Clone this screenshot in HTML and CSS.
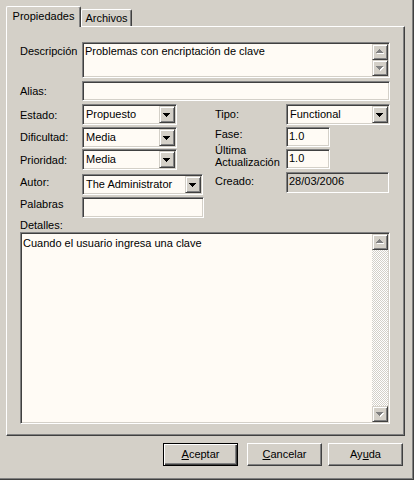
FILE: index.html
```html
<!DOCTYPE html>
<html lang="es">
<head>
<meta charset="utf-8">
<title>Propiedades</title>
<link rel="stylesheet" href="styles.css">
</head>
<body>
<div class="window">
  <div class="tabs">
    <div class="tab tab-active">Propiedades</div>
    <div class="tab tab-inactive">Archivos</div>
  </div>
  <div class="panel">
    <div class="form">
      <div class="lbl mt3">Descripción</div>
      <div class="memo span3 h36">
        <div class="memo-text pt2">Problemas con encriptación de clave</div>
        <div class="vscroll">
          <div class="sbtn"><svg class="arr-up" width="8" height="5" viewBox="0 0 8 5" shape-rendering="crispEdges"><g fill="#fff"><rect x="4" y="1" width="1" height="1"/><rect x="3" y="2" width="3" height="1"/><rect x="2" y="3" width="5" height="1"/><rect x="1" y="4" width="7" height="1"/></g><g fill="#808080"><rect x="3" y="0" width="1" height="1"/><rect x="2" y="1" width="3" height="1"/><rect x="1" y="2" width="5" height="1"/><rect x="0" y="3" width="7" height="1"/></g></svg></div>
          <div class="sbtn"><svg class="arr-down" width="8" height="5" viewBox="0 0 8 5" shape-rendering="crispEdges"><g fill="#fff"><rect x="1" y="1" width="7" height="1"/><rect x="2" y="2" width="5" height="1"/><rect x="3" y="3" width="3" height="1"/><rect x="4" y="4" width="1" height="1"/></g><g fill="#808080"><rect x="0" y="0" width="7" height="1"/><rect x="1" y="1" width="5" height="1"/><rect x="2" y="2" width="3" height="1"/><rect x="3" y="3" width="1" height="1"/></g></svg></div>
        </div>
      </div>

      <div class="lbl mt4">Alias:</div>
      <div class="edit span3 h20"></div>

      <div class="lbl mt5">Estado:</div>
      <div class="combo w95">
        <span class="combo-text">Propuesto</span>
        <span class="drop"><svg class="arr-combo" width="7" height="4" viewBox="0 0 7 4" shape-rendering="crispEdges"><g fill="#000"><rect x="0" y="0" width="7" height="1"/><rect x="1" y="1" width="5" height="1"/><rect x="2" y="2" width="3" height="1"/><rect x="3" y="3" width="1" height="1"/></g></svg></span>
      </div>
      <div class="lbl mt4">Tipo:</div>
      <div class="combo">
        <span class="combo-text">Functional</span>
        <span class="drop"><svg class="arr-combo" width="7" height="4" viewBox="0 0 7 4" shape-rendering="crispEdges"><g fill="#000"><rect x="0" y="0" width="7" height="1"/><rect x="1" y="1" width="5" height="1"/><rect x="2" y="2" width="3" height="1"/><rect x="3" y="3" width="1" height="1"/></g></svg></span>
      </div>

      <div class="lbl mt5">Dificultad:</div>
      <div class="combo w95 mt1">
        <span class="combo-text">Media</span>
        <span class="drop"><svg class="arr-combo" width="7" height="4" viewBox="0 0 7 4" shape-rendering="crispEdges"><g fill="#000"><rect x="0" y="0" width="7" height="1"/><rect x="1" y="1" width="5" height="1"/><rect x="2" y="2" width="3" height="1"/><rect x="3" y="3" width="1" height="1"/></g></svg></span>
      </div>
      <div class="lbl mt2">Fase:</div>
      <div class="edit w44 h20 mt1">1.0</div>

      <div class="lbl mt6">Prioridad:</div>
      <div class="combo w95 mt1">
        <span class="combo-text">Media</span>
        <span class="drop"><svg class="arr-combo" width="7" height="4" viewBox="0 0 7 4" shape-rendering="crispEdges"><g fill="#000"><rect x="0" y="0" width="7" height="1"/><rect x="1" y="1" width="5" height="1"/><rect x="2" y="2" width="3" height="1"/><rect x="3" y="3" width="1" height="1"/></g></svg></span>
      </div>
      <div class="lbl lbl-two">Última<br>Actualización</div>
      <div class="edit w44 h20 mt1">1.0</div>

      <div class="lbl mt5">Autor:</div>
      <div class="combo w121 mt3">
        <span class="combo-text">The Administrator</span>
        <span class="drop"><svg class="arr-combo" width="7" height="4" viewBox="0 0 7 4" shape-rendering="crispEdges"><g fill="#000"><rect x="0" y="0" width="7" height="1"/><rect x="1" y="1" width="5" height="1"/><rect x="2" y="2" width="3" height="1"/><rect x="3" y="3" width="1" height="1"/></g></svg></span>
      </div>
      <div class="lbl mt4">Creado:</div>
      <div class="edit disabled w103 h21 mt1">28/03/2006</div>

      <div class="lbl mt3">Palabras</div>
      <div class="edit w122 h21 mt2"></div>

      <div class="lbl lbl-full">Detalles:</div>
      <div class="memo full h192">
        <div class="memo-text pt4">Cuando el usuario ingresa una clave</div>
        <div class="vscroll">
          <div class="sbtn"><svg class="arr-up" width="8" height="5" viewBox="0 0 8 5" shape-rendering="crispEdges"><g fill="#fff"><rect x="4" y="1" width="1" height="1"/><rect x="3" y="2" width="3" height="1"/><rect x="2" y="3" width="5" height="1"/><rect x="1" y="4" width="7" height="1"/></g><g fill="#808080"><rect x="3" y="0" width="1" height="1"/><rect x="2" y="1" width="3" height="1"/><rect x="1" y="2" width="5" height="1"/><rect x="0" y="3" width="7" height="1"/></g></svg></div>
          <div class="track"></div>
          <div class="sbtn"><svg class="arr-down" width="8" height="5" viewBox="0 0 8 5" shape-rendering="crispEdges"><g fill="#fff"><rect x="1" y="1" width="7" height="1"/><rect x="2" y="2" width="5" height="1"/><rect x="3" y="3" width="3" height="1"/><rect x="4" y="4" width="1" height="1"/></g><g fill="#808080"><rect x="0" y="0" width="7" height="1"/><rect x="1" y="1" width="5" height="1"/><rect x="2" y="2" width="3" height="1"/><rect x="3" y="3" width="1" height="1"/></g></svg></div>
        </div>
      </div>
    </div>
  </div>
  <div class="actions">
    <div class="btn btn-default"><u>A</u>ceptar</div>
    <div class="btn"><u>C</u>ancelar</div>
    <div class="btn">Ay<u>u</u>da</div>
  </div>
</div>
</body>
</html>
```
FILE: styles.css
```css
* { box-sizing: border-box; }
html, body { margin: 0; padding: 0; }
body {
  background: #d4d0c8;
  font-family: "Liberation Sans", Arial, sans-serif;
  font-size: 11px;
  line-height: 13px;
  color: #000;
}
.window {
  width: 414px;
  height: 480px;
  box-shadow: inset -1px -1px #404040, inset -2px -2px #808080;
}

/* Tabs */
.tabs {
  display: flex;
  align-items: flex-end;
  height: 26px;
  padding-left: 6px;
}
.tab {
  background: #d4d0c8;
  border-top: 1px solid #fff;
  border-left: 1px solid #fff;
  border-right: 1px solid #404040;
  box-shadow: inset -1px 0 #808080;
  border-radius: 2px 2px 0 0;
  text-align: center;
  white-space: nowrap;
}
.tab-active {
  width: 75px;
  height: 21px;
  margin-bottom: -1px;
  padding-top: 3px;
  position: relative;
  z-index: 1;
}
.tab-inactive {
  width: 51px;
  height: 17px;
  padding-top: 2px;
}

/* Panel */
.panel {
  margin-left: 6px;
  width: 399px;
  height: 410px;
  border-top: 1px solid #fff;
  border-left: 1px solid #fff;
  border-right: 1px solid #404040;
  border-bottom: 1px solid #404040;
  box-shadow: inset -1px -1px #808080;
  padding: 15px 14px 10px 13px;
}
.form {
  display: grid;
  grid-template-columns: 62px 133px 71px 104px;
  grid-template-rows: 39px 23px 22px 22px 23px 24px 25px 12px 192px;
  align-items: start;
}
.lbl { white-space: nowrap; }
.lbl-two { line-height: 12px; margin-top: -4px; }
.lbl-full { grid-column: 1 / -1; margin-top: -1px; }
.span3 { grid-column: 2 / 5; }
.full { grid-column: 1 / -1; }

.mt1 { margin-top: 1px; }
.mt2 { margin-top: 2px; }
.mt3 { margin-top: 3px; }
.mt4 { margin-top: 4px; }
.mt5 { margin-top: 5px; }
.mt6 { margin-top: 6px; }
.h20 { height: 20px; }
.h21 { height: 21px; }
.h36 { height: 36px; }
.h192 { height: 192px; }
.w44 { width: 44px; }
.w95 { width: 95px; }
.w103 { width: 103px; }
.w121 { width: 121px; }
.w122 { width: 122px; }

/* Sunken fields */
.edit, .memo, .combo {
  background: #fffbf5;
  border: 1px solid;
  border-color: #808080 #fff #fff #808080;
  box-shadow: inset 1px 1px #404040, inset -1px -1px #d4d0c8;
}
.edit {
  padding: 0 1px 0 2px;
  line-height: 16px;
  white-space: nowrap;
  overflow: hidden;
}
.edit.disabled { background: #d4d0c8; line-height: 17px; }

.memo {
  display: flex;
  padding: 1px;
}
.memo-text { flex: 1; padding-left: 1px; }
.pt2 { padding-top: 1px; }
.pt4 { padding-top: 3px; }
.vscroll {
  width: 16px;
  display: flex;
  flex-direction: column;
}
.sbtn, .drop {
  flex: none;
  background: #d4d0c8;
  border: 1px solid;
  border-color: #d4d0c8 #404040 #404040 #d4d0c8;
  box-shadow: inset 1px 1px #fff, inset -1px -1px #808080;
}
.sbtn { width: 16px; height: 16px; }
.sbtn svg { display: block; margin-left: 3px; }
.arr-up { margin-top: 4px; }
.arr-down { margin-top: 5px; }
.track {
  flex: 1;
  background: repeating-conic-gradient(#fff 0 25%, #d4d0c8 0 50%) 0 0 / 2px 2px;
}

.combo {
  display: flex;
  height: 21px;
  padding: 1px;
}
.combo-text {
  flex: 1;
  padding-left: 2px;
  line-height: 17px;
  white-space: nowrap;
  overflow: hidden;
}
.drop { width: 16px; height: 17px; }
.arr-combo { display: block; margin: 6px 0 0 3px; }

/* Buttons */
.actions {
  display: flex;
  justify-content: flex-end;
  gap: 6px;
  padding-right: 11px;
  margin-top: 7px;
}
.btn {
  width: 75px;
  height: 23px;
  background: #d4d0c8;
  border: 1px solid;
  border-color: #fff #404040 #404040 #fff;
  box-shadow: inset -1px -1px #808080;
  text-align: center;
  line-height: 21px;
}
.btn-default {
  border-color: #000;
  box-shadow: inset 1px 1px #fff, inset -1px -1px #404040, inset -2px -2px #808080;
  margin-right: 3px;
}
```
